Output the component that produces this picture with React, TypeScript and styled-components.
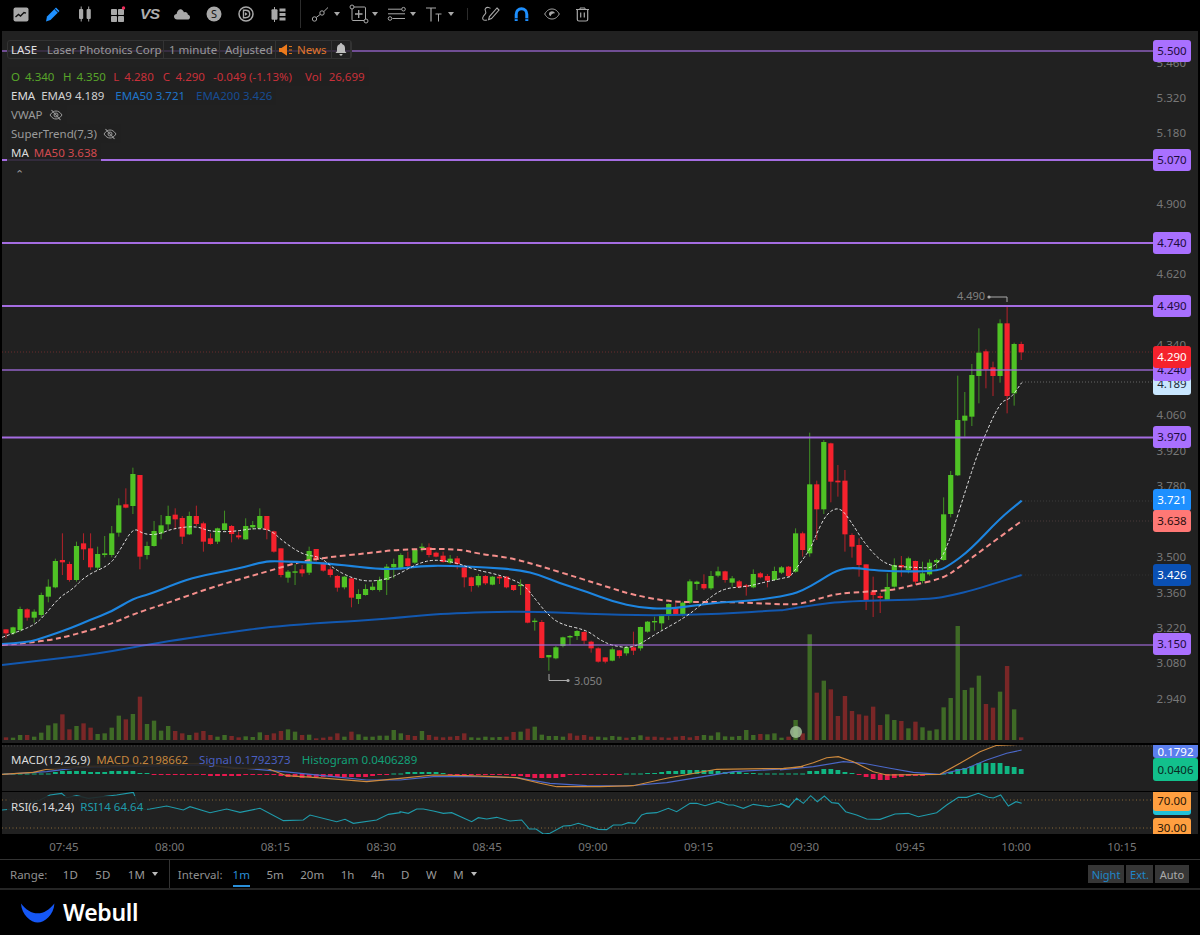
import React from "react";
import styled, { createGlobalStyle } from "styled-components";

const Global = createGlobalStyle`
  html, body { margin: 0; padding: 0; background: #000; }
  * { box-sizing: border-box; }
`;

const FONT = `"Noto Sans", "Open Sans", sans-serif`;

const Page = styled.div`
  width: 1200px; height: 935px; background: #000; display: flex; flex-direction: column;
  font-family: ${FONT}; font-size: 11.5px; overflow: hidden;
`;
const Toolbar = styled.div`
  height: 28px; display: flex; align-items: center; padding-left: 5px; flex: none;
`;
const ToolIcon = styled.div`
  width: 32.2px; height: 28px; display: flex; align-items: center; justify-content: center; flex: none;
`;
const ToolDivider = styled.div<{ $h: number; $ml: number; $mr: number }>`
  width: 1px; height: ${p => p.$h}px; background: #2c2c2c; margin: 0 ${p => p.$mr}px 0 ${p => p.$ml}px; flex: none;
`;
const DrawTool = styled.div`
  width: 38px; height: 28px; display: flex; align-items: center; flex: none;
`;
const SmallTool = styled.div`
  width: 30.5px; height: 28px; display: flex; align-items: center; justify-content: center; flex: none;
`;
const ToolCaret = styled.span`
  width: 0; height: 0; margin-left: 3px; border-left: 3px solid transparent; border-right: 3px solid transparent;
  border-top: 4px solid #a8a8a8;
`;
const VsText = styled.span`
  font: italic 700 15.5px "Liberation Sans", sans-serif; color: #aeaeae; letter-spacing: -0.5px;
`;
const Stage = styled.div`
  margin: 3px 2px 0; display: flex; flex-direction: column; flex: none;
`;
const Panel = styled.div<{ $h: number; $mt?: number }>`
  position: relative; height: ${p => p.$h}px; margin-top: ${p => p.$mt ?? 0}px; background: #212121; overflow: hidden;
`;
const ChartSvg = styled.svg`
  position: absolute; inset: 0; display: block;
`;
const Legend = styled.div`
  position: absolute; left: 5px; top: 9px; display: flex; flex-direction: column; align-items: flex-start;
`;
const TitleBox = styled.div`
  display: flex; align-items: center; height: 19px; border: 1px solid #333; border-radius: 3px;
  background: rgba(33,33,33,.72); margin-bottom: 8px; color: #999;
`;
const TitleCell = styled.div<{ $w: number; $c?: string; $pl?: number; $gap?: number }>`
  width: ${p => p.$w}px; height: 100%; display: flex; align-items: center; gap: ${p => p.$gap ?? 4}px;
  padding-left: ${p => p.$pl ?? 5}px; border-right: 1px solid #333; color: ${p => p.$c ?? "#999"}; white-space: nowrap;
`;
const LegendRow = styled.div`
  height: 19px; display: flex; align-items: center; padding: 0 4px; background: rgba(33,33,33,.86); white-space: nowrap;
`;
const Txt = styled.span<{ $c: string; $ml?: number }>`
  display: inline-flex; align-items: center; color: ${p => p.$c}; margin-left: ${p => p.$ml ?? 0}px;
`;
const CaretUp = styled.div`
  margin: 5px 0 0 8px; color: #999; font-size: 11px; line-height: 14px;
`;
const PriceLabel = styled.div<{ $y: number }>`
  position: absolute; right: 12px; top: ${p => p.$y}px; line-height: 14px; height: 14px; margin-top: -7px;
  color: #787878;
`;
const Chip = styled.div<{ $y: number; $h?: number; $bg: string; $fg: string; $wide?: boolean; $flat?: boolean }>`
  position: absolute; left: 1151px; width: ${p => (p.$wide ? 45 : 38)}px;
  top: ${p => p.$y}px; height: ${p => p.$h ?? 22}px; line-height: 1;
  background: ${p => p.$bg}; color: ${p => p.$fg}; border-radius: ${p => (p.$flat ? "0 0 3px 3px" : "3px")};
  display: flex; align-items: center; justify-content: center;
`;
const Note = styled.div<{ $x: number; $y: number }>`
  position: absolute; left: ${p => p.$x}px; top: ${p => p.$y}px; line-height: 12px; color: #808080; font-size: 11px;
`;
const SubLegend = styled.div<{ $top: number }>`
  position: absolute; left: 5px; top: ${p => p.$top}px; height: 20px; display: flex; align-items: center;
  padding: 0 4px; background: rgba(33,33,33,.88); white-space: nowrap;
`;
const TimeAxis = styled.div`
  height: 25px; display: flex; align-items: center; padding-left: 11px; color: #777; flex: none;
`;
const TimeLabel = styled.div`
  width: 105.8px; text-align: center; flex: none;
`;
const RangeBar = styled.div`
  height: 31px; display: flex; align-items: center; border-top: 1px solid #333; border-bottom: 2px solid #252525;
  flex: none; color: #999; font-size: 11.5px;
`;
const RangeGroup = styled.div`
  height: 100%; display: flex; align-items: center; gap: 17.5px; padding: 0 11px 0 10px; border-right: 1px solid #333; flex: none;
`;
const IntervalGroup = styled.div`
  height: 100%; display: flex; align-items: center; gap: 16.5px; padding-left: 8px; flex: 1;
`;
const BarLabel = styled.span<{ $mr?: number }>`
  color: #8f8f8f; margin-right: ${p => p.$mr ?? 0}px;
`;
const Pick = styled.span<{ $on?: boolean }>`
  position: relative; color: ${p => (p.$on ? "#2a8fd8" : "#999")}; height: 100%; display: flex; align-items: center; gap: 7px;
  ${p => p.$on ? "&::after{content:'';position:absolute;left:0;right:0;bottom:1px;height:2px;background:#2a8fd8;}" : ""}
`;
const BarCaret = styled.i`
  width: 0; height: 0; border-left: 3px solid transparent; border-right: 3px solid transparent; border-top: 4px solid #bbb;
`;
const ModeGroup = styled.div`
  margin-left: auto; margin-right: 11px; display: flex; gap: 2px;
`;
const ModeBtn = styled.div<{ $w: number; $on?: boolean }>`
  width: ${p => p.$w}px; height: 18px; background: #363636; color: ${p => (p.$on ? "#1f86c9" : "#aaa")}; font-size: 11px;
  display: flex; align-items: center; justify-content: center;
`;
const Footer = styled.div`
  flex: 1; display: flex; align-items: center; gap: 8px; padding: 0 0 0 21px;
`;
const Brand = styled.span`
  color: #fff; font-size: 23px; font-weight: 600; letter-spacing: -0.3px; line-height: 1;
`;

/* ---------- chart data, page pixel coordinates derived from the picture ---------- */
type C = [number, number, number, number, number, number];
const STEP = 7.05;
const cx = (i: number) => 6 + STEP * i;

// [green?, wickTop, bodyTop, bodyBottom, wickBottom] in 3x-crop units
const A: number[][] = [
  [0,568,568,580,595],[1,560,562,580,585],[1,500,507,570,575],[0,505,508,533,542],[1,508,515,533,548],
  [1,458,465,525,532],[1,418,440,470,487],[1,356,363,442,445],[0,280,360,367,405],[0,365,372,420,425],
  [1,305,318,420,425],[0,280,310,328,360],[0,280,325,382,390],[1,320,342,383,390],[1,288,340,345,352],
  [1,258,280,345,352],[1,175,196,278,290],[0,145,193,203,205],[1,83,102,198,222],[0,105,105,350,388],
  [1,305,318,345,358],[1,243,273,318,320],[1,225,256,280,298],[1,197,228,253,270],[0,205,224,238,268],
  [0,228,234,290,312],[1,215,228,283,285],[0,197,228,252,258],[0,245,250,305,335],[0,280,295,312,314],
  [1,263,265,305,312],[1,212,250,270,272],[0,255,258,282,307],[0,275,286,292,298],[1,235,258,298,300],
  [1,243,255,262,268],[1,205,228,265,268],[0,228,228,270,298],[0,272,274,335,338],[0,325,325,405,412],
  [1,390,395,413,428],[1,373,394,398,435],[0,375,388,400,410],[1,320,333,398,405],[0,327,327,360,365],
  [0,365,370,392,395],[0,380,388,405,412],[0,405,408,443,455],[1,408,410,442,448],[0,415,415,473,502],
  [1,448,462,477,492],[1,433,447,465,467],[1,428,440,450,452],[1,410,420,450,455],[1,372,380,420,465],
  [1,356,372,382,415],[1,340,345,385,390],
  [0,335,355,378,382],[1,325,330,368,372],[1,310,320,323,335],[0,310,322,345,352],[0,335,338,350,352],
  [0,335,347,366,368],[1,345,356,368,372],[0,348,355,372,388],[0,375,382,412,442],[0,410,412,438,455],
  [1,402,408,436,442],[0,405,408,430,435],[1,408,410,434,436],[0,405,410,415,432],[0,408,410,442,445],
  [0,435,435,450,453],[1,418,434,437,465],[0,432,432,548,550],[1,535,542,545,572],[0,540,546,654,655],
  [1,645,645,652,692],[1,618,622,655,658],[1,590,592,618,622],[1,585,588,592,615],[1,570,573,588,600],
  [0,573,576,602,612],[0,602,605,625,638],[0,622,625,665,668],[0,652,652,665,670],[1,622,628,662,664],
  [0,630,631,648,655],[1,618,622,640,647],[0,575,622,632,645],[1,560,561,625,632],[1,543,545,575,578],
  [1,530,543,546,572],[1,522,528,550,570],[1,490,492,525,540],[0,488,505,525,528],[1,485,488,525,530],
  [1,418,424,488,492],[1,422,425,432,450],[0,403,432,445,450],[1,393,408,445,450],[1,380,394,407,412],
  [0,392,394,420,428],[1,408,415,428,440],[0,420,424,442,445],[0,432,436,438,467],[1,388,402,442,445],
  [0,396,400,412,415],[0,402,408,422,442],[1,380,393,420,422],[1,378,382,398,402],[0,378,380,408,412],
  [1,265,280,395,398],
];
const B: number[][] = [
  [0,725,730,780,800],[1,428,583,790,800],[0,572,583,658,750],[1,450,456,658,672],[0,458,460,575,637],
  [0,525,572,577,620],[0,540,572,733,785],[0,730,735,770,803],[0,745,765,825,860],[0,823,823,930,960],
  [0,860,905,915,981],[0,909,918,924,969],[1,850,891,930,930],[1,805,825,890,893],[0,798,825,832,860],
  [1,800,805,840,850],[0,812,813,875,885],[1,815,850,873,880],[1,808,818,853,857],[1,806,810,817,835],
  [1,622,673,810,812],[1,543,555,672,682],[1,257,390,556,558],[1,306,377,392,440],[1,222,255,380,408],
  [1,115,188,258,340],[0,178,184,238,295],[0,215,232,258,318],[1,88,100,258,278],[0,50,100,318,370],
  [1,158,162,310,347],[0,155,162,187,210],
];
const candles: C[] = [
  ...A.map((c, i): C => [i, c[0], 440 + c[1] / 3, 440 + c[2] / 3, 440 + c[3] / 3, 440 + c[4] / 3]),
  ...B.map((c, i): C => [113 + i, c[0], 290 + c[1] / 3, 290 + c[2] / 3, 290 + c[3] / 3, 290 + c[4] / 3]),
];

const vol1 = [-892,893,885,-885,890,878,856,850,-823,-868,858,-850,-863,882,880,863,827,-838,822,-770,852,842,872,858,-873,-880,885,-878,-873,-885,890,885,-888,-892,889,891,877,-885,-880,-873,868,875,-885,884,-895,-893,-890,-880,890,-875,883,890,890,887,887,870,880,-885,-888,873,-885,-890,-892,-890,-888,-880,892,893,890,892,891,-890,-876,875,-866,860,884,888,888,890,-880,-887,-885,-890,890,892,888,890,-893,891,886,-890,-890,-892,-893,-890,-888,-892,-888,885,887,877,889,890,888,870,885,-882,883,880];
const vol2 = [443,-440,390,-430,133,-308,272,-298,-378,-318,-363,-373,-377,-350,-405,373,390,-393,415,-395,412,422,418,352,324,108,300,293,257,-342,-353,305,-228,358,-442];
const vols = [
  ...vol1.map((v, i) => ({ i, g: v > 0, top: 440 + Math.abs(v) / 3 })),
  ...vol2.map((v, i) => ({ i: 110 + i, g: v > 0, top: 590 + Math.abs(v) / 3 })),
];

const seg = (pts: number[][], xo: number, yo: number): number[][] =>
  pts.map(([x, y]) => [xo + x / 3, yo + y / 3]);

const smooth = (pts: number[][]) => {
  let d = `M${pts[0][0]} ${pts[0][1]}`;
  for (let i = 1; i < pts.length - 1; i++) {
    const mx = (pts[i][0] + pts[i + 1][0]) / 2;
    const my = (pts[i][1] + pts[i + 1][1]) / 2;
    d += ` Q${pts[i][0]} ${pts[i][1]} ${mx} ${my}`;
  }
  const l = pts[pts.length - 1];
  return d + ` L${l[0]} ${l[1]}`;
};
const poly = (pts: number[][]) => pts.map(p => p.join(",")).join(" ");

const ema9 = [
  ...seg([[6,592],[60,573],[105,553],[130,530],[180,470],[215,450],[260,405],[330,375],[360,330],[400,262],[430,282],[470,285],[520,265],[590,258],[630,275],[700,275],[760,265],[810,268],[850,305],[910,345],[960,350],[1000,385],[1050,412],[1100,425],[1160,418]],0,440),
  ...seg([[0,400],[50,372],[100,358],[170,368],[220,388],[300,405],[370,432],[400,470],[440,520],[480,553],[560,570],[600,600],[640,618],[700,625],[770,580],[860,530],[920,480],[970,445],[1040,440],[1100,425],[1170,410]],400,440),
  ...seg([[30,860],[90,780],[110,730],[140,670],[178,650],[210,690],[260,770],[320,828],[400,832],[470,835],[510,750],[560,590],[600,470],[660,335],[690,328],[725,278]],780,290),
];
const ema50 = [
  ...seg([[6,612],[80,608],[140,590],[210,565],[270,540],[335,515],[400,475],[450,462],[530,430],[590,410],[720,385],[790,365],[830,363],[950,368],[1030,375],[1130,387]],0,440),
  ...seg([[0,387],[60,378],[140,377],[260,382],[360,390],[420,405],[480,430],[560,455],[640,485],[720,503],[800,507],[880,497],[960,487],[1060,482],[1170,465]],400,440),
  ...seg([[70,900],[115,875],[170,840],[220,832],[300,843],[470,845],[510,825],[570,780],[660,685],[725,632]],780,290),
];
const ma50 = [
  ...seg([[6,615],[130,605],[220,585],[340,550],[400,522],[500,490],[640,440],[800,395],[900,365],[980,352],[1100,340]],0,440),
  ...seg([[0,328],[170,326],[240,342],[330,353],[420,378],[540,415],[620,440],[700,465],[820,487],[960,485],[1080,490],[1150,493]],400,440),
  ...seg([[0,43],[60,43],[130,22],[180,10],[260,5]],780,590),
  ...seg([[340,900],[400,885],[490,865],[540,830],[620,770],[725,693]],780,290),
];
const ema200 = [
  ...seg([[6,675],[120,662],[240,648],[340,633],[420,618],[530,600],[700,575],[800,562],[940,550],[1030,545]],0,440),
  ...seg([[0,533],[130,520],[380,513],[560,522],[760,527],[960,522],[1150,510]],400,440),
  ...seg([[0,62],[100,45],[200,33],[450,28],[520,15]],780,590),
  ...seg([[580,900],[660,875],[725,855]],780,290),
];

const priceLines: { y: number; w: number; o: number }[] = [
  { y: 51, w: 1.5, o: 0.8 }, { y: 160, w: 2, o: 1 }, { y: 243, w: 2, o: 1 }, { y: 306, w: 2, o: 1 },
  { y: 370, w: 1.5, o: 0.85 }, { y: 437.5, w: 2, o: 1 }, { y: 645, w: 1.3, o: 0.75 },
];

const macdO = [
  ...seg([[6,118],[100,112],[140,103],[230,95],[600,85],[700,100],[800,100],[860,122],[950,128],[1100,140]],0,735),
  ...seg([[0,130],[100,120],[200,122],[350,128],[420,145],[470,155],[600,155],[700,152],[800,130],[950,103],[1150,100],[1210,95]],400,735),
  ...seg([[0,537],[60,530],[100,518],[140,503],[175,500],[220,515],[280,545],[320,555],[480,553],[540,520],[600,485],[650,466],[725,463]],780,590),
];
const macdS = [
  ...seg([[6,118],[140,110],[235,98],[600,90],[700,97],[850,110],[1000,125],[1100,135]],0,735),
  ...seg([[0,135],[100,125],[200,124],[350,128],[450,145],[560,152],[680,153],[800,143],[950,118],[1000,110],[1150,102]],400,735),
  ...seg([[0,540],[100,530],[190,515],[250,520],[330,535],[400,547],[480,553],[560,535],[620,510],[680,490],[725,480]],780,590),
];
const histA = [.5,.5,.5,.5,.5,.5,.5,2,3,3,3,3,2,2,2,3,3,3,3,1,1,-.5,-.5,-.5,-.5,-.5,-.5,-.5,-.5,-2,-2,-2,-2,-2,-1,-1,-1,-1,-1,-2,-3,-3,-4,-3,-3,-3,-3,-3,-3,-3,-3,-3,-2,-1,-1,.5,.5,2,2,2,2,2,1,-.5,-.5,-.5,-.5,-.5,-.5,-.5,-1,-1,-2,-2,-3,-4,-4,-4,-4,-3,-1,-1,-1,-.5,-.5,-.5,-.5,-.5,.5,.5,.5,1,1,2,3,3,4,4,4,4,4,3,2,2,2,1,1,.5,.5,.5];
const histB = [.5,.5,.5,.5,3,3,5,5,4,2,1,-1,-3,-5,-6,-6,-4,-3,-2,-2,-2,-1,-1,.5,2,5,6,8,11,11,11,11,8,7,5];
const hist = [...histA.slice(0, 110), ...histB];

const rsi = [
  ...seg([[6,225],[40,222],[120,195],[150,180],[185,175],[200,188],[230,182],[265,190],[350,180],[400,172],[420,225],[450,222],[500,213],[550,225],[570,215],[630,233],[680,222],[720,232],[780,220],[850,257],[910,255],[930,240],[1010,260],[1035,253],[1060,265],[1130,255],[1165,238],[1200,233]],0,735),
  ...seg([[0,230],[25,235],[50,222],[70,222],[100,228],[130,235],[155,233],[215,260],[235,248],[260,252],[290,247],[330,258],[365,255],[388,282],[408,282],[430,297],[450,295],[490,273],[510,272],[535,265],[595,283],[620,284],[640,270],[665,270],[685,263],[705,265],[725,240],[740,235],[770,233],[805,220],[830,230],[870,205],[890,205],[915,212],[955,200],[985,210],[1000,210],[1030,220],[1060,208],[1105,215],[1145,207],[1170,217]],400,735),
  ...seg([[0,640],[25,652],[50,625],[70,640],[92,617],[112,635],[133,618],[155,638],[175,640],[197,665],[230,675],[260,687],[300,688],[345,672],[385,670],[415,680],[470,668],[500,645],[535,622],[560,622],[595,610],[625,622],[640,624],[662,615],[685,648],[708,635],[725,640]],780,590),
];

const axisPrices: [string, number][] = [
  ["5.460", 63], ["5.320", 98], ["5.180", 133], ["4.900", 204], ["4.620", 274], ["4.340", 345],
  ["4.060", 415], ["3.920", 451], ["3.780", 486], ["3.500", 557], ["3.360", 593], ["3.220", 628],
  ["3.080", 663], ["2.940", 699],
];

/* ---------- icons ---------- */
const G = "#a8a8a8";
const IconChart = () => (
  <svg width="16" height="15" viewBox="0 0 16 15"><rect x=".5" y=".5" width="15" height="14" rx="2" fill={G} /><path d="M2.5 10 L5.5 7.5 L7.5 9 L11 5.5 L13 6.2" fill="none" stroke="#111" strokeWidth="1.4" /></svg>
);
const IconPen = () => (
  <svg width="16" height="16" viewBox="0 0 16 16"><path d="M11 1.5 L14.5 5 L5.5 14 L1 15.5 L2 10.5 Z" fill="#1e90ff" /><path d="M9.6 3 L13 6.4" stroke="#000" strokeWidth="1" /></svg>
);
const IconCandles = () => (
  <svg width="14" height="16" viewBox="0 0 14 16" fill={G}><rect x="1" y="3" width="4.2" height="10" rx="1" /><rect x="2.7" y="0.5" width="1" height="15" /><rect x="8.6" y="3" width="4.2" height="10" rx="1" /><rect x="10.2" y="0.5" width="1" height="15" /></svg>
);
const IconGrid = () => (
  <svg width="16" height="17" viewBox="0 0 16 17"><g fill={G}><rect x="1" y="3" width="6" height="6" rx=".8" /><rect x="8" y="3" width="6" height="6" rx=".8" /><rect x="1" y="10" width="6" height="6" rx=".8" /><rect x="8" y="10" width="6" height="6" rx=".8" /></g><circle cx="13.5" cy="2" r="1.7" fill="#ef2b5a" /></svg>
);
const IconCloud = () => (
  <svg width="16" height="12" viewBox="0 0 16 12"><path d="M3.3 11.5 C1 11.5 0 10 0 8.6 C0 6.9 1.3 6 2.6 6 C3 3 5 .5 7 1.3 C8.5 1.9 9.4 3 10 4.4 C10.6 3.9 12 3.8 13 4.8 C13.7 5.5 13.8 6.2 13.8 6.6 C15.2 7 16 8.2 16 9.2 C16 10.6 14.8 11.5 13.6 11.5 Z" fill={G} /></svg>
);
const IconCoin = () => (
  <svg width="16" height="16" viewBox="0 0 16 16"><circle cx="8" cy="8" r="7.5" fill={G} /><text x="8" y="11.7" textAnchor="middle" fontSize="11" fontFamily="Noto Sans" fill="#111">S</text></svg>
);
const IconD = () => (
  <svg width="16" height="16" viewBox="0 0 16 16" fill="none" stroke={G}><circle cx="8" cy="8" r="7" strokeWidth="1.5" /><path d="M5.5 4.3 H7.5 C10.3 4.3 11.7 6 11.7 8 C11.7 10 10.3 11.7 7.5 11.7 H5.5 Z" strokeWidth="1.4" /><path d="M7 6.2 L9.6 8 L7 9.8 Z" fill={G} stroke="none" /></svg>
);
const IconSplit = () => (
  <svg width="15" height="15" viewBox="0 0 15 15" fill={G}><rect x="0.5" y="2.2" width="6" height="10.5" rx="1" /><rect x="3" y="0" width="1" height="15" /><rect x="8.5" y="1.5" width="6" height="3" /><rect x="8.5" y="6" width="6" height="3" /><rect x="8.5" y="10.5" width="6" height="3" /></svg>
);
const IconLine = () => (
  <svg width="20" height="18" viewBox="0 0 20 18" fill="none" stroke={G}><circle cx="3.5" cy="14" r="2.2" /><circle cx="11" cy="8" r="2.2" /><path d="M5.2 12.5 L9.3 9.4 M12.8 6.6 L17 2.5" /></svg>
);
const IconBox = () => (
  <svg width="20" height="20" viewBox="0 0 20 20" fill="none" stroke={G}><rect x="3" y="3" width="13.5" height="13.5" rx="1" /><circle cx="3" cy="3" r="2" fill="#000" /><circle cx="17" cy="17" r="2" fill="#000" /><path d="M6 10 H13.5 M9.7 6 V14" strokeWidth="1.3" /></svg>
);
const IconLevels = () => (
  <svg width="20" height="16" viewBox="0 0 20 16" fill="none" stroke={G}><path d="M1 3.2 H14.5 M1 7.8 H18 M5.5 12.5 H18" /><circle cx="16.5" cy="3.2" r="1.8" /><circle cx="3" cy="12.5" r="1.8" /></svg>
);
const IconText = () => (
  <svg width="20" height="18" viewBox="0 0 20 18" fill="none" stroke={G}><path d="M1 3 H11 M6 3 V16.5" strokeWidth="1.2" /><path d="M10.5 9 H16.5 M13.5 9 V16.5" strokeWidth="1" /></svg>
);
const IconScribble = () => (
  <svg width="19" height="16" viewBox="0 0 19 16" fill="none" stroke={G} strokeWidth="1.1"><path d="M6 14 C2 15 0.5 13 2.5 10 C4 8 6 7.5 4.5 5 C3.2 3 5 1 7.5 1.5 C8.5 1.7 9 2 9.5 2.4" /><path d="M16 2 L18 4 L10.5 12.5 L7.6 13.6 L8.4 10.6 Z" /></svg>
);
const IconMagnet = () => (
  <svg width="15" height="15" viewBox="0 0 15 15" fill="none" stroke="#1e90ff"><path d="M2.2 14 V7.2 C2.2 4 4.5 1.8 7.5 1.8 C10.5 1.8 12.8 4 12.8 7.2 V14" strokeWidth="3" /><path d="M.5 11.7 H4 M11 11.7 H14.5" stroke="#000" strokeWidth=".8" /></svg>
);
const IconEye = () => (
  <svg width="16" height="12" viewBox="0 0 16 12"><path d="M.7 6 C3 2 5.5 1 8 1 C10.5 1 13 2 15.3 6 C13 10 10.5 11 8 11 C5.5 11 3 10 .7 6 Z" fill="none" stroke={G} /><path d="M5 6 C5 4 6.5 3.2 8 3.2 C9.6 3.2 10.6 4 11 5.4 C9.5 5 7.5 5.5 6.6 8.3 C5.6 7.8 5 7 5 6 Z" fill={G} /></svg>
);
const IconTrash = () => (
  <svg width="15" height="15" viewBox="0 0 15 15" fill="none" stroke={G}><path d="M1 2.5 H14 M5 2.5 V1 H10 V2.5" /><path d="M2.3 2.5 V12.5 C2.3 13.5 3 14 4 14 H11 C12 14 12.7 13.5 12.7 12.5 V2.5" strokeWidth="1.2" /><path d="M5.7 5.5 V10.5 M9.3 5.5 V10.5" strokeWidth="1.2" /></svg>
);
const IconSpeaker = () => (
  <svg width="14" height="12" viewBox="0 0 14 12"><path d="M0 4 H2.5 L8 .3 V11.7 L2.5 8 H0 Z" fill="#ec7a1c" /><path d="M10 2.5 H13 M10 6 H13 M10 9.5 H13" stroke="#ec7a1c" strokeWidth=".9" /></svg>
);
const IconBell = () => (
  <svg width="12" height="13" viewBox="0 0 12 13"><path d="M6 0 C6.6 0 7 .4 7 1 C9 1.6 10 3.2 10 5.2 V8.2 L11.5 10 H.5 L2 8.2 V5.2 C2 3.2 3 1.6 5 1 C5 .4 5.4 0 6 0 Z M4.5 11 H7.5 C7.5 12 6.8 12.7 6 12.7 C5.2 12.7 4.5 12 4.5 11 Z" fill="#bdbdbd" /></svg>
);
const IconEyeOff = () => (
  <svg width="14" height="12" viewBox="0 0 14 12" fill="none" stroke="#9a9a9a"><path d="M1 6 C3 3 5 2 7 2 C9 2 11 3 13 6 C11 9 9 10 7 10 C5 10 3 9 1 6 Z" /><circle cx="7" cy="6" r="2" /><path d="M2.5 1 L11.5 11" strokeWidth="1.1" /></svg>
);
const LogoSmile = () => (
  <svg width="34" height="20" viewBox="0 0 34 20"><path d="M0 .5 C.5 12 10 19.5 16.7 19.5 C23.5 19.5 33 12 33.4 .5 C28 7 23 10.3 16.7 10.3 C10.5 10.3 5 7 0 .5 Z" fill="#1557f5" /></svg>
);

/* ---------- panels ---------- */
const MainDrawing = () => (
  <ChartSvg width="1196" height="712" viewBox="2 31 1196 712">
    {vols.map(v => (
      <rect key={v.i} x={cx(v.i) - 2.2} y={v.top} width="4.4" height={740 - v.top} fill={v.g ? "#3f6a26" : "#7a2727"} />
    ))}
    <line x1="2" x2="1154" y1="352" y2="352" stroke="#6a2c2c" strokeDasharray="1 2" />
    <line x1="1022" x2="1154" y1="382" y2="382" stroke="#666" strokeDasharray="1 2" />
    <line x1="1022" x2="1154" y1="501" y2="501" stroke="#3d3d3d" strokeDasharray="1 2" />
    <line x1="1022" x2="1154" y1="521" y2="521" stroke="#4a3a3a" strokeDasharray="1 2" />
    <line x1="1022" x2="1154" y1="575" y2="575" stroke="#333" strokeDasharray="1 2" />
    {candles.map(([i, g, wt, bt, bb, wb]) => {
      const col = g ? "#4fc225" : "#f5222d";
      return (
        <g key={i}>
          <line x1={cx(i)} x2={cx(i)} y1={wt} y2={wb} stroke={col} strokeOpacity=".7" />
          <rect x={cx(i) - 2.6} y={bt} width="5.2" height={Math.max(bb - bt, 1.4)} fill={col} />
        </g>
      );
    })}
    <path d={smooth(ema200)} fill="none" stroke="#1258b0" strokeWidth="2" />
    <path d={smooth(ma50)} fill="none" stroke="#f58f8c" strokeWidth="2" strokeDasharray="5.5 3.5" />
    <path d={smooth(ema50)} fill="none" stroke="#1d85e0" strokeWidth="2.1" />
    <path d={smooth(ema9)} fill="none" stroke="#e8e8e8" strokeWidth="1" strokeDasharray="3 2" />
    {priceLines.map(l => (
      <line key={l.y} x1="2" x2="1154" y1={l.y} y2={l.y} stroke="#a56de2" strokeWidth={l.w} strokeOpacity={l.o} />
    ))}
    <path d="M1007 302 V297 H990" fill="none" stroke="#aaa" />
    <circle cx="989" cy="297" r="1.6" fill="#aaa" />
    <path d="M549 674 V680.5 H567" fill="none" stroke="#aaa" />
    <circle cx="568" cy="680.5" r="1.6" fill="#aaa" />
    <circle cx="796" cy="732" r="6" fill="#a9c9a0" fillOpacity=".8" />
  </ChartSvg>
);

const MacdDrawing = () => (
  <ChartSvg width="1196" height="46" viewBox="2 745 1196 46">
    {hist.map((h, i) => (
      <rect key={i} x={cx(i) - 2.4} width="4.8" y={h >= 0 ? 774 - h : 774} height={Math.max(Math.abs(h), 1)} fill={h >= 0 ? "#10b582" : "#e8184f"} />
    ))}
    <line x1="2" x2="1153" y1="746" y2="746" stroke="#444" strokeDasharray="1 2" />
    <polyline points={poly(macdS)} fill="none" stroke="#4b68c9" strokeWidth="1.1" />
    <polyline points={poly(macdO)} fill="none" stroke="#cf8a3d" strokeWidth="1.1" />
  </ChartSvg>
);

const RsiDrawing = () => (
  <ChartSvg width="1196" height="42" viewBox="2 792 1196 42">
    <line x1="2" x2="1153" y1="800" y2="800" stroke="#8a6a3a" strokeDasharray="1 2.5" />
    <line x1="2" x2="1153" y1="828" y2="828" stroke="#8a6a3a" strokeDasharray="1 2.5" />
    <polyline points={poly(rsi)} fill="none" stroke="#1f9bab" strokeWidth="1.1" />
  </ChartSvg>
);

const TIMES = ["07:45", "08:00", "08:15", "08:30", "08:45", "09:00", "09:15", "09:30", "09:45", "10:00", "10:15"];
const INTERVALS = ["5m", "20m", "1h", "4h", "D", "W"];

export default function App() {
  return (
    <Page>
      <Global />
      <Toolbar>
        <ToolIcon><IconChart /></ToolIcon>
        <ToolIcon><IconPen /></ToolIcon>
        <ToolIcon><IconCandles /></ToolIcon>
        <ToolIcon><IconGrid /></ToolIcon>
        <ToolIcon><VsText>VS</VsText></ToolIcon>
        <ToolIcon><IconCloud /></ToolIcon>
        <ToolIcon><IconCoin /></ToolIcon>
        <ToolIcon><IconD /></ToolIcon>
        <ToolIcon><IconSplit /></ToolIcon>
        <ToolDivider $h={28} $ml={5} $mr={10} />
        <DrawTool><IconLine /><ToolCaret /></DrawTool>
        <DrawTool><IconBox /><ToolCaret /></DrawTool>
        <DrawTool><IconLevels /><ToolCaret /></DrawTool>
        <DrawTool><IconText /><ToolCaret /></DrawTool>
        <ToolDivider $h={12} $ml={4} $mr={8} />
        <SmallTool><IconScribble /></SmallTool>
        <SmallTool><IconMagnet /></SmallTool>
        <SmallTool><IconEye /></SmallTool>
        <SmallTool><IconTrash /></SmallTool>
      </Toolbar>

      <Stage>
        <Panel $h={712}>
          <MainDrawing />
          {axisPrices.map(([t, y]) => <PriceLabel key={t} $y={y - 31}>{t}</PriceLabel>)}
          <Note $x={955} $y={259}>4.490</Note>
          <Note $x={572} $y={644}>3.050</Note>
          <Chip $y={9} $bg="#a970ff" $fg="#1c0b3a">5.500</Chip>
          <Chip $y={118} $bg="#a970ff" $fg="#1c0b3a">5.070</Chip>
          <Chip $y={201} $bg="#a970ff" $fg="#1c0b3a">4.740</Chip>
          <Chip $y={264} $bg="#a970ff" $fg="#1c0b3a">4.490</Chip>
          <Chip $y={342} $bg="#c9e7ff" $fg="#1c2a3a">4.189</Chip>
          <Chip $y={328} $bg="#a970ff" $fg="#1c0b3a">4.240</Chip>
          <Chip $y={315} $bg="#f5222d" $fg="#fff">4.290</Chip>
          <Chip $y={395} $bg="#a970ff" $fg="#1c0b3a">3.970</Chip>
          <Chip $y={458} $bg="#1e90ff" $fg="#fff">3.721</Chip>
          <Chip $y={479} $bg="#ff7875" $fg="#2a0f0f">3.638</Chip>
          <Chip $y={533} $bg="#0a50b4" $fg="#fff">3.426</Chip>
          <Chip $y={602} $bg="#a970ff" $fg="#1c0b3a">3.150</Chip>
          <Legend>
            <TitleBox>
              <TitleCell $w={156} $c="#e0e0e0" $pl={3} $gap={0}>LASE<Txt $c="#999" $ml={10}>Laser Photonics Corp</Txt></TitleCell>
              <TitleCell $w={56}>1 minute</TitleCell>
              <TitleCell $w={56}>Adjusted</TitleCell>
              <TitleCell $w={56} $c="#e0762a" $pl={3}><IconSpeaker />News</TitleCell>
              <TitleCell $w={19} $pl={3}><IconBell /></TitleCell>
            </TitleBox>
            <LegendRow>
              <Txt $c="#58a52a">O</Txt><Txt $c="#58a52a" $ml={5}>4.340</Txt>
              <Txt $c="#58a52a" $ml={8.5}>H</Txt><Txt $c="#58a52a" $ml={5}>4.350</Txt>
              <Txt $c="#c9303a" $ml={7.5}>L</Txt><Txt $c="#c9303a" $ml={5}>4.280</Txt>
              <Txt $c="#c9303a" $ml={9}>C</Txt><Txt $c="#c9303a" $ml={5.5}>4.290</Txt>
              <Txt $c="#c9303a" $ml={8}>-0.049 (-1.13%)</Txt>
              <Txt $c="#c9303a" $ml={13}>Vol</Txt><Txt $c="#c9303a" $ml={7}>26,699</Txt>
            </LegendRow>
            <LegendRow>
              <Txt $c="#dcdcdc">EMA</Txt><Txt $c="#d0d0d0" $ml={6}>EMA9 4.189</Txt>
              <Txt $c="#1f74c8" $ml={11}>EMA50 3.721</Txt><Txt $c="#174c92" $ml={11}>EMA200 3.426</Txt>
            </LegendRow>
            <LegendRow>
              <Txt $c="#9a9a9a">VWAP</Txt><Txt $c="#9a9a9a" $ml={7}><IconEyeOff /></Txt>
            </LegendRow>
            <LegendRow>
              <Txt $c="#9a9a9a">SuperTrend(7,3)</Txt><Txt $c="#9a9a9a" $ml={6}><IconEyeOff /></Txt>
            </LegendRow>
            <LegendRow>
              <Txt $c="#dcdcdc">MA</Txt><Txt $c="#d24a50" $ml={5}>MA50 3.638</Txt>
            </LegendRow>
            <CaretUp>⌃</CaretUp>
          </Legend>
        </Panel>
        <Panel $h={46} $mt={2}>
          <MacdDrawing />
          <SubLegend $top={4}>
            <Txt $c="#dcdcdc">MACD(12,26,9)</Txt>
            <Txt $c="#c4853d" $ml={6}>MACD 0.2198662</Txt>
            <Txt $c="#4a5fc0" $ml={11}>Signal 0.1792373</Txt>
            <Txt $c="#12a077" $ml={11}>Histogram 0.0406289</Txt>
          </SubLegend>
          <Chip $wide $flat $y={0} $h={13} $bg="#5b7fee" $fg="#fff">0.1792</Chip>
          <Chip $wide $y={13} $h={23} $bg="#12c08c" $fg="#08291f">0.0406</Chip>
        </Panel>
        <Panel $h={42} $mt={1}>
          <RsiDrawing />
          <SubLegend $top={4}>
            <Txt $c="#dcdcdc">RSI(6,14,24)</Txt>
            <Txt $c="#1f9bab" $ml={6}>RSI14 64.64</Txt>
          </SubLegend>
          <Chip $y={12} $h={11} $bg="#1fc0d8" $fg="#1fc0d8" />
          <Chip $y={-2} $h={21} $bg="#ff9f40" $fg="#2a1604">70.00</Chip>
          <Chip $y={26} $h={20} $bg="#ff9f40" $fg="#2a1604">30.00</Chip>
        </Panel>
      </Stage>

      <TimeAxis>
        {TIMES.map(t => <TimeLabel key={t}>{t}</TimeLabel>)}
      </TimeAxis>

      <RangeBar>
        <RangeGroup>
          <BarLabel $mr={-2}>Range:</BarLabel>
          <Pick>1D</Pick>
          <Pick>5D</Pick>
          <Pick>1M<BarCaret /></Pick>
        </RangeGroup>
        <IntervalGroup>
          <BarLabel $mr={-6.5}>Interval:</BarLabel>
          <Pick $on>1m</Pick>
          {INTERVALS.map(t => <Pick key={t}>{t}</Pick>)}
          <Pick>M<BarCaret /></Pick>
        </IntervalGroup>
        <ModeGroup>
          <ModeBtn $w={36} $on>Night</ModeBtn>
          <ModeBtn $w={27} $on>Ext.</ModeBtn>
          <ModeBtn $w={34}>Auto</ModeBtn>
        </ModeGroup>
      </RangeBar>

      <Footer>
        <LogoSmile />
        <Brand>Webull</Brand>
      </Footer>
    </Page>
  );
}
